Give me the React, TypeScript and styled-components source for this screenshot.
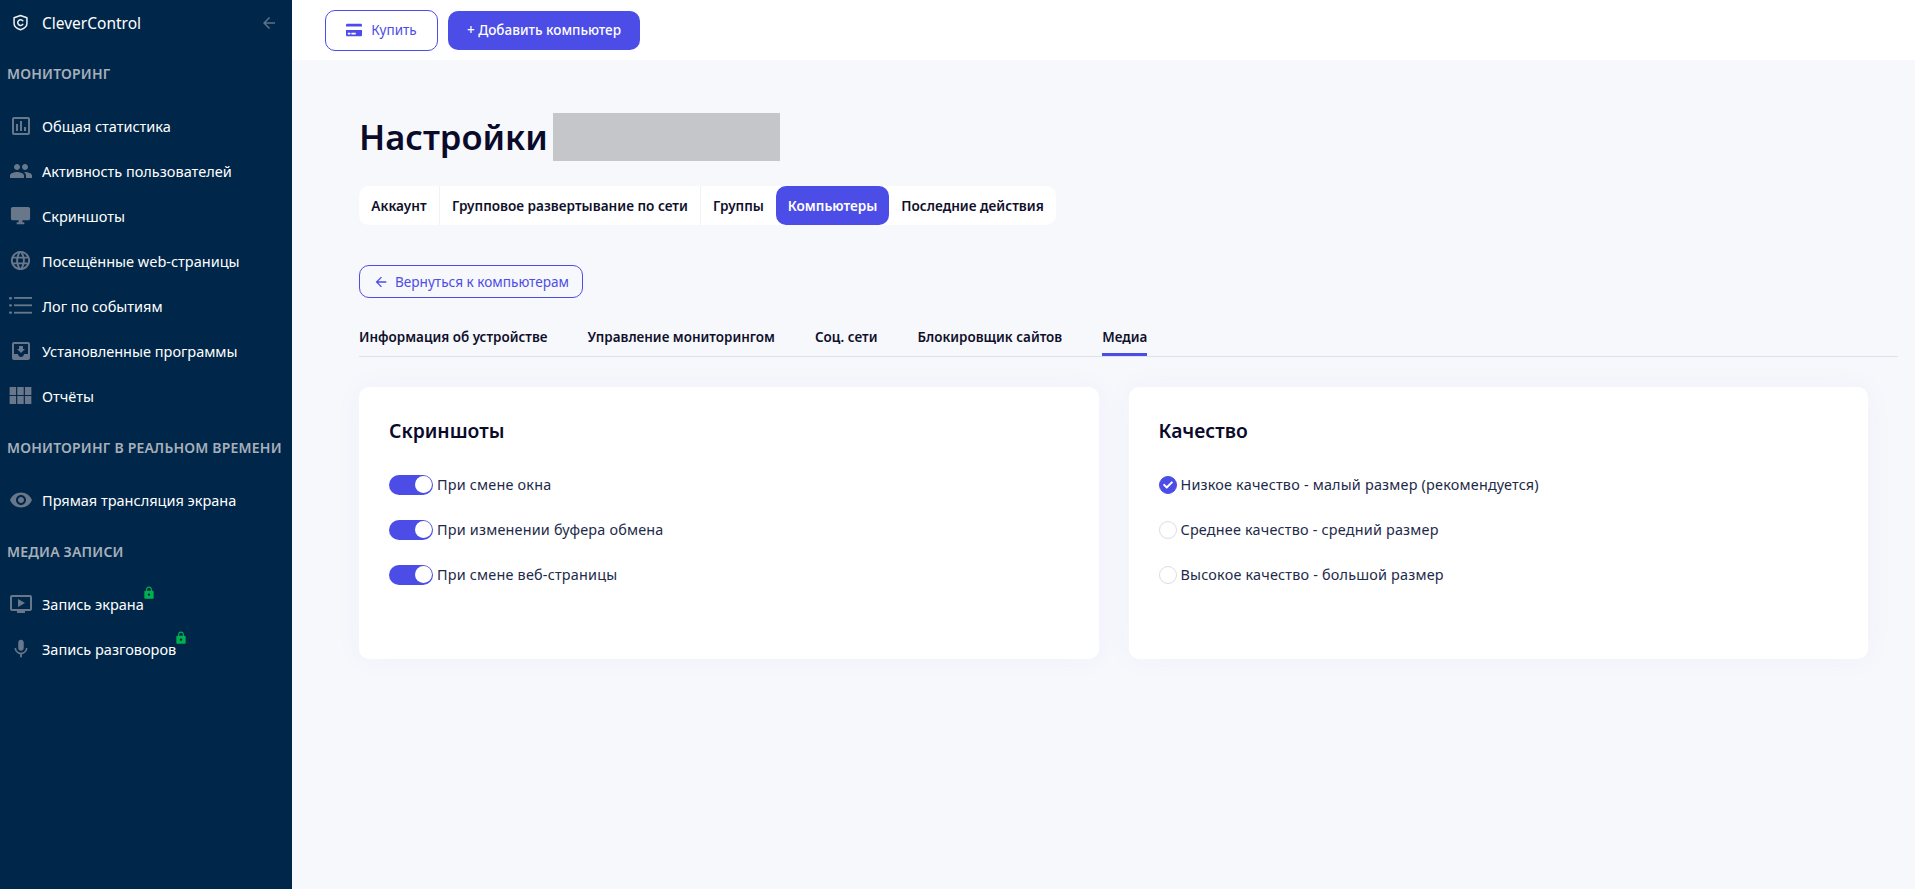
import { createGlobalStyle, styled } from 'styled-components'
import { FaCheck, FaCreditCard } from 'react-icons/fa'
import {
  MdArrowBack,
  MdDesktopWindows,
  MdLanguage,
  MdLock,
  MdMic,
  MdMoveToInbox,
  MdOndemandVideo,
  MdOutlineAssessment,
  MdPeople,
  MdViewModule,
  MdVisibility,
} from 'react-icons/md'

const GlobalStyle = createGlobalStyle`
  html, body {
    margin: 0;
    padding: 0;
    height: 100%;
    background: #f7f8fc;
    font-family: "Noto Sans", "Open Sans", sans-serif;
  }
  * {
    box-sizing: border-box;
  }
`

const Page = styled.div`
  display: flex;
  min-height: 889px;
`

const Sidebar = styled.aside`
  flex: 0 0 292px;
  background: #00274a;
  color: #fff;
  display: flex;
  flex-direction: column;
`

const Brand = styled.div`
  display: flex;
  align-items: center;
  height: 45px;
  margin-bottom: 15px;
  padding: 0 14px 0 12px;
  font-size: 15.5px;
  svg:first-child {
    margin-right: 13px;
    flex: none;
  }
  span {
    flex: 1;
  }
  svg:last-child {
    color: #5f7186;
  }
`

const SectionLabel = styled.div`
  margin: 0;
  padding-left: 7px;
  height: 28px;
  line-height: 28px;
  font-size: 14px;
  font-weight: 600;
  color: #a7b0ba;
  white-space: nowrap;
  letter-spacing: 0.2px;
`

const NavList = styled.div<{ $top: number; $bottom: number }>`
  display: flex;
  flex-direction: column;
  padding-top: ${(p) => p.$top}px;
  padding-bottom: ${(p) => p.$bottom}px;
`

const NavItem = styled.div`
  display: flex;
  align-items: center;
  gap: 8px;
  height: 45px;
  padding-left: 7px;
  font-size: 14.5px;
  color: #fff;
`

const NavIcon = styled.span`
  flex: 0 0 27px;
  min-width: 0;
  width: 27px;
  display: flex;
  align-items: center;
  justify-content: center;
  color: #69778a;
  svg {
    flex: none;
  }
`

const NavLabel = styled.span`
  position: relative;
`

const LockBadge = styled.span`
  position: absolute;
  top: -8px;
  left: calc(100% - 2px);
  color: #00b14f;
  display: flex;
`

const ListIcon = () => (
  <svg width="27" height="27" viewBox="0 0 27 27" fill="currentColor">
    <rect x="2" y="5" width="3" height="2.4" rx="1" />
    <rect x="7" y="5" width="18" height="1.8" />
    <rect x="2" y="12.2" width="3" height="2.4" rx="1" />
    <rect x="7" y="12.4" width="18" height="1.8" />
    <rect x="2" y="19.4" width="3" height="2.4" rx="1" />
    <rect x="7" y="19.8" width="18" height="1.8" />
  </svg>
)

const Main = styled.div`
  flex: 1;
  min-width: 0;
  display: flex;
  flex-direction: column;
`

const TopBar = styled.header`
  height: 60px;
  background: #fff;
  display: flex;
  align-items: center;
  gap: 10px;
  padding-left: 33px;
`

const BuyButton = styled.button`
  width: 113px;
  height: 41px;
  display: flex;
  align-items: center;
  justify-content: center;
  gap: 9px;
  background: #fff;
  border: 1px solid #4c4de6;
  border-radius: 10px;
  color: #4c4de6;
  font: 400 13.5px "Noto Sans", sans-serif;
`

const AddButton = styled.button`
  width: 192px;
  height: 39px;
  background: #4c4de6;
  border: 0;
  border-radius: 10px;
  color: #fff;
  font: 500 13.5px "Noto Sans", sans-serif;
`

const Content = styled.main`
  padding: 53px 47px 0 67px;
`

const TitleRow = styled.div`
  display: flex;
  align-items: center;
  gap: 5px;
  height: 48px;
`

const Title = styled.h1`
  margin: 0;
  padding-bottom: 2px;
  font-size: 34.5px;
  font-weight: 600;
  color: #0a0a2a;
`

const Redacted = styled.div`
  width: 227px;
  height: 48px;
  background: #c5c6ca;
`

const Tabs = styled.div`
  display: inline-flex;
  margin-top: 25px;
  height: 39px;
  background: #fff;
  border-radius: 10px;
`

const Tab = styled.div<{ $active?: boolean; $width: number; $divider?: boolean }>`
  width: ${(p) => p.$width}px;
  display: flex;
  align-items: center;
  justify-content: center;
  font-size: 13.6px;
  font-weight: 600;
  white-space: nowrap;
  color: ${(p) => (p.$active ? '#fff' : '#10102c')};
  background: ${(p) => (p.$active ? '#4c4de6' : 'transparent')};
  border-radius: ${(p) => (p.$active ? '10px' : '0')};
  border-right: ${(p) => (p.$divider ? '1px solid #f1f2f6' : '0')};
`

const BackButton = styled.button`
  display: flex;
  align-items: center;
  gap: 6px;
  width: 224px;
  height: 33px;
  margin-top: 40px;
  padding-left: 13px;
  background: transparent;
  border: 1px solid #4c4de6;
  border-radius: 10px;
  color: #4c4de6;
  font: 400 13.6px "Noto Sans", sans-serif;
  white-space: nowrap;
`

const SubTabs = styled.nav`
  display: flex;
  gap: 40px;
  margin: 26px -30px 0 0;
  height: 33px;
  border-bottom: 1px solid #dfe1ea;
`

const SubTab = styled.div<{ $active?: boolean }>`
  height: 32px;
  padding-top: 4px;
  font-size: 13.45px;
  font-weight: 600;
  color: #10102c;
  white-space: nowrap;
  border-bottom: ${(p) => (p.$active ? '3px solid #4c4de6' : '0')};
`

const Cards = styled.div`
  display: grid;
  grid-template-columns: 1fr 1fr;
  gap: 30px;
  margin-top: 30px;
`

const Card = styled.section`
  height: 272px;
  background: #fff;
  border-radius: 10px;
  padding: 30px;
  box-shadow: 0 0 30px rgba(70, 80, 160, 0.04);
`

const CardTitle = styled.h2`
  margin: 0 0 17px;
  height: 28px;
  line-height: 28px;
  font-size: 19.3px;
  font-weight: 600;
  color: #0a0a2a;
`

const OptionRow = styled.div`
  display: flex;
  align-items: center;
  gap: 4px;
  height: 45px;
  font-size: 14.4px;
  color: #1d2a4a;
  letter-spacing: 0.2px;
`

const Toggle = styled.span`
  width: 44px;
  height: 20px;
  border-radius: 10px;
  background: #4c4de6;
  display: flex;
  align-items: center;
  justify-content: flex-end;
  padding-right: 1px;
  &::after {
    content: '';
    width: 17px;
    height: 17px;
    border-radius: 50%;
    background: #fff;
  }
`

const Radio = styled.span<{ $checked?: boolean }>`
  width: 18px;
  height: 18px;
  border-radius: 50%;
  display: flex;
  align-items: center;
  justify-content: center;
  color: #fff;
  background: ${(p) => (p.$checked ? '#4c4de6' : '#fff')};
  border: 1px solid ${(p) => (p.$checked ? '#4c4de6' : '#dcdde3')};
`

const ShieldLogo = () => (
  <svg width="17" height="17" viewBox="0 0 18 18" fill="none" stroke="#eef1f4" strokeWidth="1.6">
    <path d="M9 1.5 15.8 4v6c0 3-2.6 5.2-6.8 6.6C4.8 15.2 2.2 13 2.2 10V4Z" strokeLinejoin="round" />
    <path d="M11.4 7.2A3 3 0 1 0 11.4 11" strokeLinecap="round" />
  </svg>
)

const monitoring = [
  { icon: <MdOutlineAssessment size={24} />, label: 'Общая статистика' },
  { icon: <MdPeople size={24} />, label: 'Активность пользователей' },
  { icon: <MdDesktopWindows size={23} />, label: 'Скриншоты' },
  { icon: <MdLanguage size={23} />, label: 'Посещённые web-страницы' },
  { icon: <ListIcon />, label: 'Лог по событиям' },
  { icon: <MdMoveToInbox size={24} />, label: 'Установленные программы' },
  { icon: <MdViewModule size={29} />, label: 'Отчёты' },
]

const media = [
  { icon: <MdOndemandVideo size={24} />, label: 'Запись экрана' },
  { icon: <MdMic size={22} />, label: 'Запись разговоров' },
]

const tabs = [
  { label: 'Аккаунт', width: 81, divider: true },
  { label: 'Групповое развертывание по сети', width: 261, divider: true },
  { label: 'Группы', width: 75 },
  { label: 'Компьютеры', width: 113, active: true },
  { label: 'Последние действия', width: 167 },
]

const subTabs = ['Информация об устройстве', 'Управление мониторингом', 'Соц. сети', 'Блокировщик сайтов', 'Медиа']
const screenshots = ['При смене окна', 'При изменении буфера обмена', 'При смене веб-страницы']
const quality = [
  'Низкое качество - малый размер (рекомендуется)',
  'Среднее качество - средний размер',
  'Высокое качество - большой размер',
]

export default function App() {
  return (
    <Page>
      <GlobalStyle />
      <Sidebar>
        <Brand>
          <ShieldLogo />
          <span>CleverControl</span>
          <MdArrowBack size={18} />
        </Brand>
        <SectionLabel>МОНИТОРИНГ</SectionLabel>
        <NavList $top={15} $bottom={16}>
          {monitoring.map((item) => (
            <NavItem key={item.label}>
              <NavIcon>{item.icon}</NavIcon>
              <NavLabel>{item.label}</NavLabel>
            </NavItem>
          ))}
        </NavList>
        <SectionLabel>МОНИТОРИНГ В РЕАЛЬНОМ ВРЕМЕНИ</SectionLabel>
        <NavList $top={15} $bottom={16}>
          <NavItem>
            <NavIcon>
              <MdVisibility size={24} />
            </NavIcon>
            <NavLabel>Прямая трансляция экрана</NavLabel>
          </NavItem>
        </NavList>
        <SectionLabel>МЕДИА ЗАПИСИ</SectionLabel>
        <NavList $top={15} $bottom={0}>
          {media.map((item) => (
            <NavItem key={item.label}>
              <NavIcon>{item.icon}</NavIcon>
              <NavLabel>
                {item.label}
                <LockBadge>
                  <MdLock size={14} />
                </LockBadge>
              </NavLabel>
            </NavItem>
          ))}
        </NavList>
      </Sidebar>
      <Main>
        <TopBar>
          <BuyButton>
            <FaCreditCard size={16} />
            Купить
          </BuyButton>
          <AddButton>+ Добавить компьютер</AddButton>
        </TopBar>
        <Content>
          <TitleRow>
            <Title>Настройки</Title>
            <Redacted />
          </TitleRow>
          <Tabs>
            {tabs.map((tab) => (
              <Tab key={tab.label} $width={tab.width} $active={tab.active} $divider={tab.divider}>
                {tab.label}
              </Tab>
            ))}
          </Tabs>
          <BackButton>
            <MdArrowBack size={16} />
            Вернуться к компьютерам
          </BackButton>
          <SubTabs>
            {subTabs.map((tab) => (
              <SubTab key={tab} $active={tab === 'Медиа'}>
                {tab}
              </SubTab>
            ))}
          </SubTabs>
          <Cards>
            <Card>
              <CardTitle>Скриншоты</CardTitle>
              {screenshots.map((text) => (
                <OptionRow key={text}>
                  <Toggle />
                  {text}
                </OptionRow>
              ))}
            </Card>
            <Card>
              <CardTitle>Качество</CardTitle>
              {quality.map((text, index) => (
                <OptionRow key={text}>
                  <Radio $checked={index === 0}>{index === 0 && <FaCheck size={10} />}</Radio>
                  {text}
                </OptionRow>
              ))}
            </Card>
          </Cards>
        </Content>
      </Main>
    </Page>
  )
}
